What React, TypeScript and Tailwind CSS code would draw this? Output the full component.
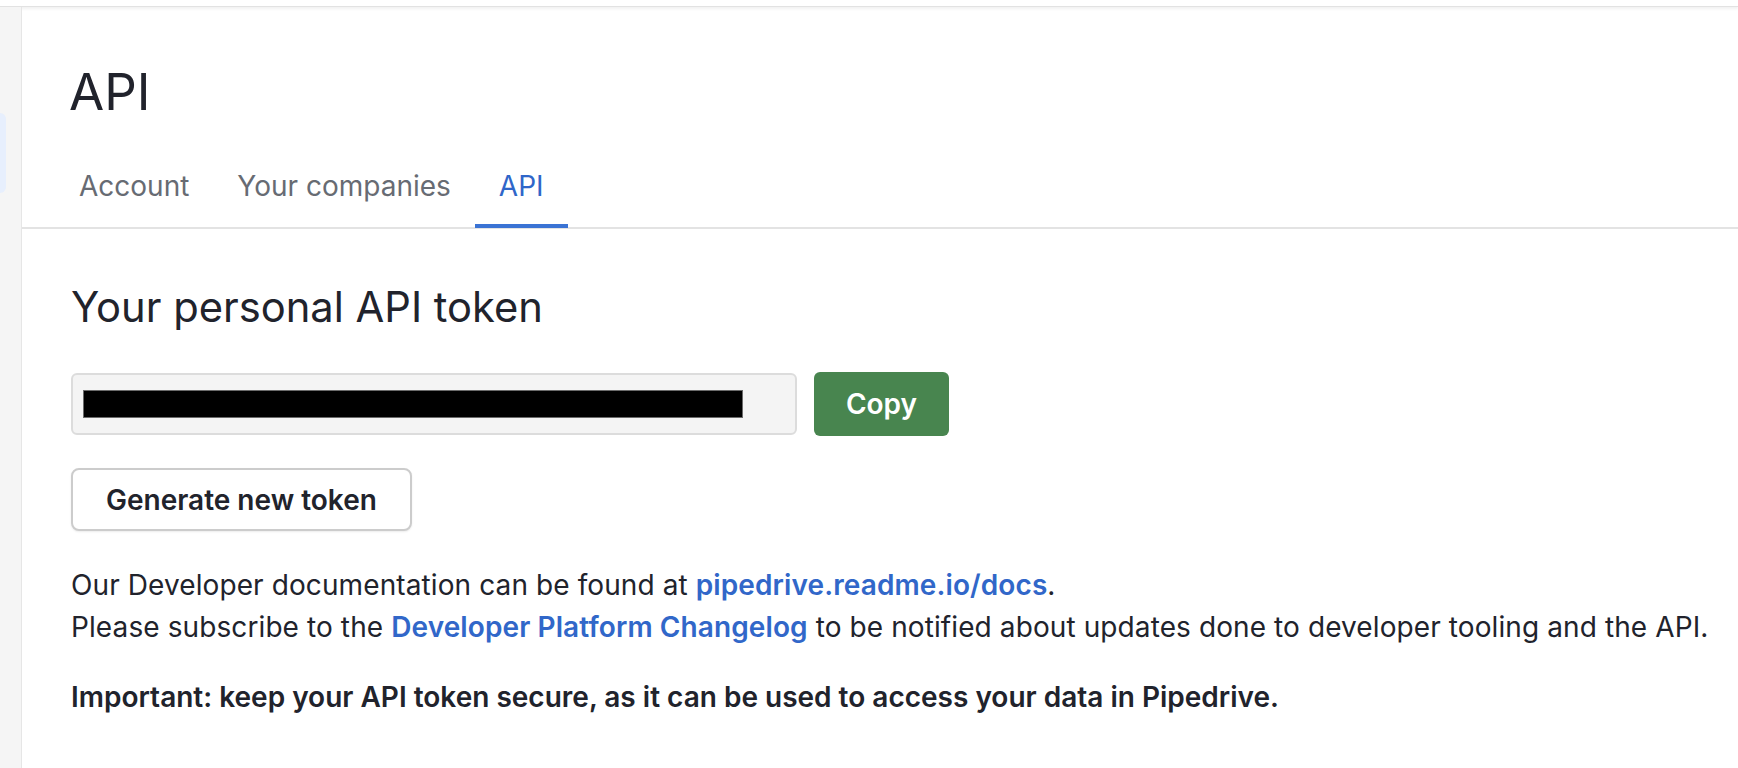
import React, { useState } from "react";

const tabs = ["Account", "Your companies", "API"];

export default function App() {
  const [activeTab, setActiveTab] = useState("API");

  return (
    <div
      className="flex min-h-screen w-full flex-col bg-white text-[#21232c]"
      style={{ fontFamily: "Inter, 'Noto Sans', sans-serif" }}
    >
      {/* Top header edge */}
      <div className="h-[7px] w-full border-b border-[#e2e2e2] bg-white shadow-[0_2px_3px_rgba(0,0,0,0.06)]" />

      <div className="flex flex-1">
        {/* Sidebar strip */}
        <aside className="w-[22px] shrink-0 border-r border-[#e6e6e6] bg-[#f5f5f5] pt-[106px]">
          <div className="h-[80px] w-[6px] rounded-r-[6px] bg-[#e7effd]" />
        </aside>

        {/* Main content */}
        <main className="flex-1">
          <h1 className="mt-[59px] pl-[47px] text-[51px] leading-none font-normal">
            API
          </h1>

          <nav className="mt-[48px] flex border-b-2 border-[#e3e3e3] pl-[33px]">
            {tabs.map((tab) => (
              <button
                key={tab}
                onClick={() => setActiveTab(tab)}
                className={`-mb-[1px] border-b-4 px-6 pb-[17px] text-[28px] leading-[42px] ${
                  activeTab === tab
                    ? "border-[#3a73d4] text-[#2f66c9]"
                    : "border-transparent text-[#676b73]"
                }`}
              >
                {tab}
              </button>
            ))}
          </nav>

          <section className="pl-[49px]">
            <h2 className="mt-[53px] text-[41.7px] leading-[50px] font-normal">
              Your personal API token
            </h2>

            <div className="mt-[40px] flex items-center gap-[17px]">
              <div className="flex h-[62px] w-[726px] items-center rounded-[6px] border-2 border-[#dcdcdc] bg-[#f4f4f4] pl-[10px]">
                <div className="h-[28px] w-[660px] border border-[#6b6b6b] bg-black" />
              </div>
              <button className="h-[64px] w-[135px] rounded-[6px] bg-[#48854f] text-[28px] font-semibold text-white">
                Copy
              </button>
            </div>

            <button className="mt-[32px] h-[63px] rounded-[8px] border-2 border-[#cccccc] bg-white px-[33px] text-[28px] font-semibold shadow-[0_1px_2px_rgba(0,0,0,0.08)]">
              Generate new token
            </button>

            <div className="mt-[33px] text-[28px] leading-[42px] tracking-[0.1px]">
              <p>
                Our Developer documentation can be found at{" "}
                <a className="font-semibold text-[#3167c9]" href="#">
                  pipedrive.readme.io/docs
                </a>
                .
              </p>
              <p>
                Please subscribe to the{" "}
                <a className="font-semibold text-[#3167c9]" href="#">
                  Developer Platform Changelog
                </a>{" "}
                to be notified about updates done to developer tooling and the
                API.
              </p>
              <p className="mt-[28px] font-semibold tracking-normal">
                Important: keep your API token secure, as it can be used to
                access your data in Pipedrive.
              </p>
            </div>
          </section>
        </main>
      </div>
    </div>
  );
}
